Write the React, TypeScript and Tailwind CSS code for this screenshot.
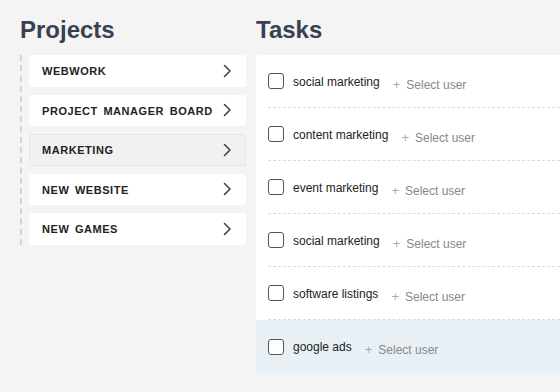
import React from 'react';

const projects = ['WEBWORK', 'PROJECT MANAGER BOARD', 'MARKETING', 'NEW WEBSITE', 'NEW GAMES'];

const tasks = [
  'social marketing',
  'content marketing',
  'event marketing',
  'social marketing',
  'software listings',
  'google ads',
];

function Chevron() {
  return (
    <svg width="9" height="14" viewBox="0 0 9 14" fill="none">
      <polyline points="1.5,1.5 7,7 1.5,12.5" stroke="#444" strokeWidth="1.6" strokeLinecap="round" strokeLinejoin="round" />
    </svg>
  );
}

export default function App() {
  return (
    <div className="min-h-screen bg-[#f4f4f4] flex pt-[18px] font-['Liberation_Sans',Arial,sans-serif] overflow-hidden">
      <div className="ml-[20px] w-[226px] shrink-0">
        <h1 className="text-[24px] leading-none h-[24px] font-bold text-[#374151]">Projects</h1>
        <div className="mt-[13px] border-l-2 border-dashed border-[#d4d4d4] pl-[7px] flex flex-col gap-[8px]">
          {projects.map(p => (
            <div
              key={p}
              className={
                p === 'MARKETING'
                  ? 'h-[31.5px] rounded-[3px] bg-[#f1f1f1] border border-[#e6e6e6] pl-[12px] pr-[13px] flex items-center justify-between'
                  : 'h-[31.5px] rounded-[3px] bg-white pl-[13px] pr-[14px] flex items-center justify-between'
              }
            >
              <span className="pt-[1px] text-[11px] font-bold tracking-[0.05em] text-[#222] [word-spacing:2px]">{p}</span>
              <Chevron />
            </div>
          ))}
        </div>
      </div>
      <div className="ml-[10px] flex-1 min-w-0">
        <h1 className="text-[24px] leading-none h-[24px] font-bold text-[#374151]">Tasks</h1>
        <div className="mt-[13px] bg-white rounded-tl-[3px] flex flex-col">
          {tasks.map((t, i) => {
            const last = i === tasks.length - 1;
            return (
              <div key={i} className={last ? 'h-[53px] bg-[#e8f0f6] pl-[12px]' : 'h-[53px] pl-[12px]'}>
                <div
                  className={
                    last
                      ? 'h-full flex items-center'
                      : 'h-full flex items-center border-b border-dashed border-[#dcdcdc]'
                  }
                >
                  <span className="w-[16px] h-[16px] rounded-[3px] border border-[#555] bg-white shrink-0" />
                  <span className="ml-[9px] pt-[1px] text-[12px] text-[#222] whitespace-nowrap">{t}</span>
                  <span className="ml-[13px] pt-[7px] text-[12px] text-[#888] whitespace-nowrap flex items-center">
                    <span className="text-[#aaa] mr-[6px] text-[13px] font-light">+</span>
                    Select user
                  </span>
                </div>
              </div>
            );
          })}
        </div>
      </div>
    </div>
  );
}
